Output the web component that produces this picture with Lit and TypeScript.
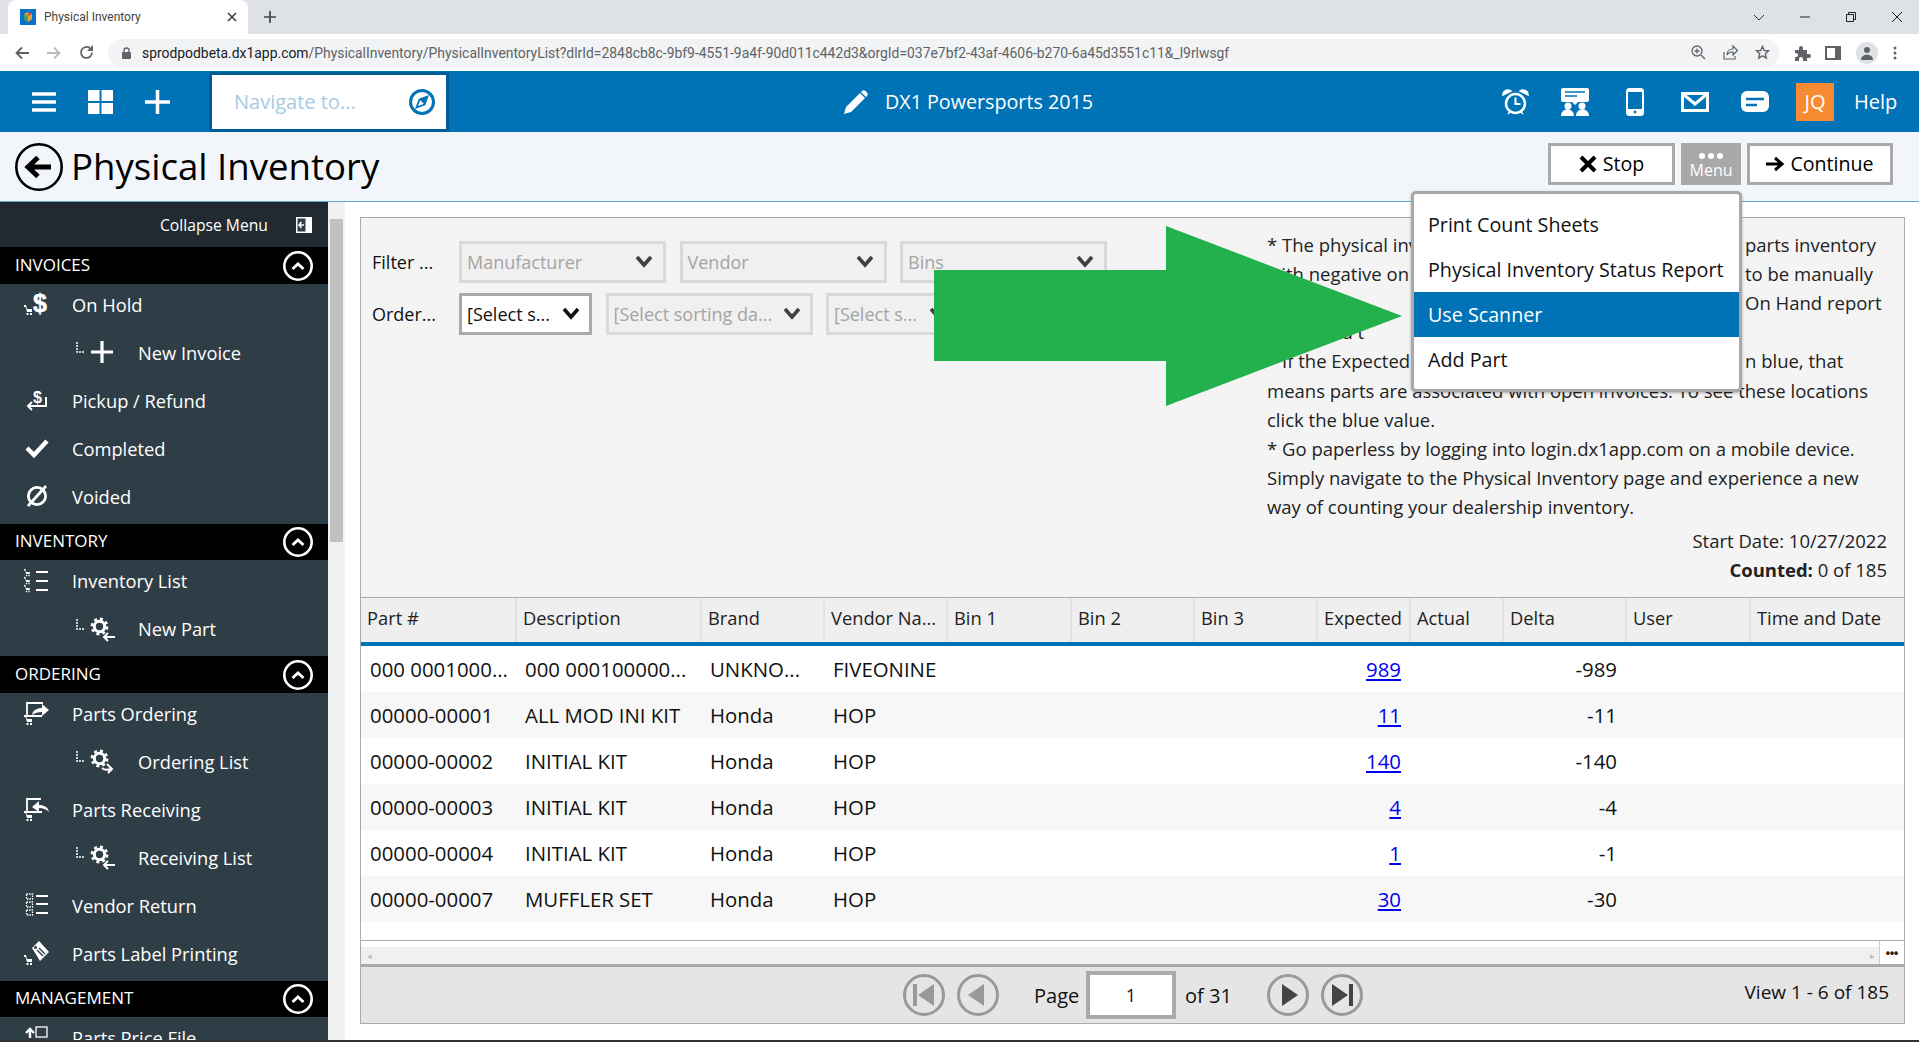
import { LitElement, html, css, svg } from "lit";
import { customElement } from "lit/decorators.js";

const W = "#fff";
const cart = (x = 0, y = 0) => svg`<g transform="translate(${x} ${y})" fill="#fff"><path d="M0 0h2l1 4h5v3H3L1.600 2H0z"/><rect x="2.500" y="8" width="2" height="2"/><rect x="6" y="8" width="2" height="2"/></g>`;
const miniCart = (y: number) => svg`<g transform="translate(0 ${y}) scale(.72)">${cart()}</g>`;
const gear = (x: number, y: number) => svg`<g transform="translate(${x} ${y})" fill="none" stroke="#fff"><circle r="5.200" stroke-width="3"/><circle r="7.600" stroke-width="2.600" stroke-dasharray="3 3"/></g>`;
const ic = (w: number, h: number, body: unknown) => html`<svg width=${w} height=${h} viewBox="0 0 ${w} ${h}" aria-hidden="true">${body}</svg>`;

const sideIcons: Record<string, unknown> = {
  hold: ic(26, 24, svg`<text x="9" y="20" font-family="Liberation Sans" font-weight="700" font-size="25" fill="#fff" stroke="#fff" stroke-width=".5">$</text>${cart(0, 13)}`),
  pickup: ic(26, 24, svg`<text x="9" y="15" font-family="Liberation Sans" font-weight="700" font-size="16" fill="#fff">$</text><path d="M22 9v9H4M8 14l-4 4 4 4" fill="none" stroke="#fff" stroke-width="2"/>`),
  check: ic(26, 24, svg`<path d="M3 12l7 7L23 5" fill="none" stroke="#fff" stroke-width="4.400"/>`),
  void: ic(26, 24, svg`<circle cx="13" cy="12" r="8.600" fill="none" stroke="#fff" stroke-width="2.800"/><path d="M4 22L22 2" stroke="#fff" stroke-width="2.800"/>`),
  list: ic(26, 24, svg`${miniCart(0)}${miniCart(8)}${miniCart(16)}<path d="M12 3h12M12 12h12M12 21h12" stroke="#fff" stroke-width="2"/>`),
  order: ic(26, 24, svg`<path d="M3 16V2h16M3 15h15" fill="none" stroke="#fff" stroke-width="1.800"/><path d="M8 14c1-5 5-7 10-7V3l7 6-7 6v-4c-4 0-7 1-10 3z" fill="#fff"/>${cart(0, 14)}`),
  recv: ic(26, 24, svg`<path d="M3 16V2h14M3 15h15" fill="none" stroke="#fff" stroke-width="1.800"/><path d="M25 15c-1-5-5-7-10-7V4L8 10l7 5v-4c4 0 7 1 10 4z" fill="#fff"/>${cart(0, 14)}`),
  ret: ic(26, 24, svg`${[1, 9, 17].map((y) => svg`<rect x="2.500" y=${y} width="6" height="5" fill="none" stroke="#fff" stroke-width="1.300" stroke-dasharray="1.500 1"/>`)}<path d="M12 3h12M12 11h12M12 20h12" stroke="#fff" stroke-width="2"/>`),
  label: ic(26, 24, svg`<path d="M8 7l7-7 10 11-9 9z" fill="#fff"/><circle cx="11.500" cy="6.500" r="1.500" fill="#2f3d46"/><path d="M13 9l6 6M15 7l6 6" stroke="#2f3d46" stroke-width="1.400"/>${cart(0, 14)}`),
  price: ic(26, 24, svg`<path d="M6 12V4M2 7l4-4 4 4" fill="none" stroke="#fff" stroke-width="2.400"/><rect x="12" y="1" width="11" height="10" fill="none" stroke="#fff" stroke-width="1.300"/>`),
};
const subIcons: Record<string, unknown> = {
  plus: ic(24, 24, svg`<path d="M12 1v22M1 12h22" stroke="#fff" stroke-width="3.200"/>`),
  gearIn: ic(26, 24, svg`${gear(9.500, 9.500)}<path d="M25 20H14M18 16l-4 4 4 4" fill="none" stroke="#fff" stroke-width="2"/>`),
  gearOut: ic(26, 24, svg`${gear(9.500, 9.500)}<path d="M12 19c3 3 6 2 9 1M17 15l5 5-4 4" fill="none" stroke="#fff" stroke-width="2"/>`),
};

type Item = { t: string; i: string; sub?: boolean };
const menu: { h: string; items: Item[] }[] = [
  { h: "INVOICES", items: [
    { t: "On Hold", i: "hold" }, { t: "New Invoice", i: "plus", sub: true },
    { t: "Pickup / Refund", i: "pickup" }, { t: "Completed", i: "check" }, { t: "Voided", i: "void" } ] },
  { h: "INVENTORY", items: [ { t: "Inventory List", i: "list" }, { t: "New Part", i: "gearIn", sub: true } ] },
  { h: "ORDERING", items: [
    { t: "Parts Ordering", i: "order" }, { t: "Ordering List", i: "gearOut", sub: true },
    { t: "Parts Receiving", i: "recv" }, { t: "Receiving List", i: "gearIn", sub: true },
    { t: "Vendor Return", i: "ret" }, { t: "Parts Label Printing", i: "label" } ] },
  { h: "MANAGEMENT", items: [ { t: "Parts Price File", i: "price" } ] },
];

const cols = ["Part #", "Description", "Brand", "Vendor Na...", "Bin 1", "Bin 2", "Bin 3", "Expected", "Actual", "Delta", "User", "Time and Date"];
const rows = [
  ["000 0001000...", "000 000100000...", "UNKNO...", "FIVEONINE", "989", "-989"],
  ["00000-00001", "ALL MOD INI KIT", "Honda", "HOP", "11", "-11"],
  ["00000-00002", "INITIAL KIT", "Honda", "HOP", "140", "-140"],
  ["00000-00003", "INITIAL KIT", "Honda", "HOP", "4", "-4"],
  ["00000-00004", "INITIAL KIT", "Honda", "HOP", "1", "-1"],
  ["00000-00007", "MUFFLER SET", "Honda", "HOP", "30", "-30"],
];
const notes: [string, string][] = [
  ["* The physical inv", "parts inventory"],
  ["with negative on", "to be manually"],
  ["If you can", "On Hand report"],
  ["if you find t", ""],
  ["* If the Expected", "n blue, that"],
];
const notesFull = [
  "means parts are associated with open invoices. To see these locations",
  "click the blue value.",
  "* Go paperless by logging into login.dx1app.com on a mobile device.",
  "Simply navigate to the Physical Inventory page and experience a new",
  "way of counting your dealership inventory.",
];

const chevron = ic(18, 14, svg`<path d="M2 2l7 8 7-8" fill="none" stroke="currentColor" stroke-width="3.600"/>`);

@customElement("app-root")
export class AppRoot extends LitElement {
  static styles = css`
    :host { display: block; width: 1919px; height: 1042px; position: relative; overflow: hidden; background: #fff;
      font-family: "Open Sans", "Noto Sans", sans-serif; color: #111; }
    svg { display: block; flex: none; overflow: visible; }
    .tabs { height: 34px; background: #dee1e6; display: flex; align-items: center; position: relative; }
    .tab { width: 240px; height: 34px; margin-left: 8px; background: #fff; border-radius: 8px 8px 0 0; display: flex; align-items: center;
      padding: 0 11px 0 12px; box-sizing: border-box; font: 12px Roboto, sans-serif; color: #444; gap: 8px; }
    .tab .name { flex: 1; }
    .newtab { margin-left: 16px; }
    .winctl { margin-left: auto; display: flex; align-items: center; gap: 30px; padding-right: 14px; }
    .addr { height: 37px; background: #fff; display: flex; align-items: center; padding-left: 15px; box-sizing: border-box; }
    .nav3 { display: flex; gap: 18px; align-items: center; width: 93px; flex: none; }
    .pill { width: 1671px; height: 28px; flex: none; background: #f1f3f4; border-radius: 14px; display: flex; align-items: center; padding: 0 9px 0 34px; box-sizing: border-box; position: relative; font: 13.900px Roboto, sans-serif; color: #5f6368; }
    .lock { position: absolute; left: 14px; top: 8px; }
    .url { flex: 1; white-space: nowrap; }
    .url b { font-weight: 400; color: #202124; }
    .pillic { display: flex; gap: 17px; align-items: center; }
    .ext { display: flex; align-items: center; gap: 15px; margin-left: 15px; }
    .avatar { width: 22px; height: 22px; border-radius: 50%; background: #dee1e6; display: flex; align-items: center; justify-content: center; }
    .blue { height: 61px; background: #0073b7; display: flex; align-items: center; color: #fff; position: relative; }
    .blue .l { display: flex; align-items: center; gap: 32px; padding-left: 32px; width: 209px; flex: none; box-sizing: border-box; }
    .search { width: 240px; height: 60px; flex: none; border: 3px solid #005e96; box-sizing: border-box; background: #fff; display: flex; align-items: center; justify-content: space-between; padding: 0 10px 0 22px; color: #a5cbe5; font-size: 20px; }
    .center { display: flex; align-items: center; gap: 17px; margin-left: 395px; font-size: 19.700px; }
    .r { position: absolute; left: 1502px; top: 0; height: 61px; display: flex; align-items: center; }
    .ri { margin-right: 32px; }
    .ri.ph { margin-left: 5px; margin-right: 37px; }
    .jq { width: 38px; height: 38px; background: #f68b33; display: flex; align-items: center; justify-content: center; font-size: 20px; margin-left: -5px; }
    .help { margin-left: 20px; font-size: 20px; }
    .title { height: 69px; background: #f2f6fa; border-bottom: 1px solid #5fa5d3; display: flex; align-items: center; position: relative; }
    .back { margin-left: 15px; }
    .title h1 { margin: -2px 0 0 8px; font-weight: 400; font-size: 36.600px; color: #000; }
    .btns { margin-left: auto; padding-right: 26px; display: flex; gap: 6px; align-items: center; margin-top: -6px; }
    .btn { height: 42px; border: 3px solid #aaa; background: #fff; box-sizing: border-box; display: flex; align-items: center; justify-content: center; gap: 6px; font-size: 19.600px; color: #000; }
    .stop { width: 127px; } .cont { width: 146px; }
    .mbtn { width: 60px; height: 42px; background: #a9a9a9; color: #fff; display: flex; flex-direction: column; align-items: center; font-size: 16px; line-height: 18px; padding-top: 10px; box-sizing: border-box; }
    .dots { display: flex; gap: 3px; height: 6px; margin-bottom: 2px; }
    .dots i { width: 6px; height: 6px; border-radius: 50%; background: #fff; }
    .body { display: flex; height: 839px; }
    .side { width: 328px; background: #2f3d46; color: #fff; overflow: hidden; flex: none; }
    .coll { height: 45px; background: #212a31; display: flex; align-items: center; justify-content: flex-end; padding-right: 16px; gap: 28px; font-size: 15.700px; }
    .sh { height: 36.500px; background: #000; display: flex; align-items: center; justify-content: space-between; padding: 0 15px; font-size: 17px; }
    .sh > span:first-child { margin-top: -2px; }
    .circ { width: 30px; height: 30px; margin-top: 1px; }
    .it { height: 48px; display: flex; align-items: center; font-size: 18.300px; padding: 0 0 7px 24px; box-sizing: border-box; }
    .it .t { margin-left: 22px; }
    .it.sub { padding-left: 76px; }
    .it.sub .t { margin-left: 24px; }
    .sic { width: 24px; flex: none; }
    .corner { margin-right: 6px; margin-top: -8px; }
    .sb { width: 17px; background: #f1f1f1; flex: none; position: relative; }
    .sb .th { margin: 17px 2px 0; height: 323px; background: #c1c1c1; }
    .main { flex: 1; padding: 15px 0 0 15px; background: #fff; }
    .panel { width: 1545px; height: 807px; background: #f4f4f4; border: 1px solid #aaa; box-sizing: border-box; display: flex; flex-direction: column; }
    .top { height: 379px; display: flex; }
    .filters { width: 906px; padding: 23px 0 0 11px; box-sizing: border-box; }
    .frow { display: flex; align-items: center; gap: 13.500px; height: 42px; margin-bottom: 10px; font-size: 18px; }
    .frow label { width: 74px; margin-right: -.5px; }
    .sel { height: 42px; width: 207px; border: 3px solid #d9d9d9; background: #f0f0f0; box-sizing: border-box; color: #a4a4a4; display: flex; align-items: center; justify-content: space-between; padding: 0 10px 0 5px; font-size: 18px; }
    .sel svg { color: #404040; }
    .sel.on { width: 133px; background: #fff; border-color: #aaa; color: #111; padding-right: 9px; }
    .sel.on svg { color: #111; }
    .sel.dis2 { padding-right: 9px; }
    .sel.s { width: 133px; }
    .notes { flex: 1; padding: 11.500px 17px 0 0; font-size: 18.500px; line-height: 29.200px; color: #222; box-sizing: border-box; }
    .nl { display: grid; grid-template-columns: 478px auto; white-space: nowrap; }
    .tot { text-align: right; margin-top: 4px; }
    .tot b { font-weight: 700; }
    .grid { display: grid; grid-template-columns: 156px 185px 123px 123px 124px 123px 123px 93px 93px 123px 124px 1fr; align-items: center; }
    .thead { height: 49px; border-top: 1px solid #aaa; border-bottom: 4px solid #0073b7; background: #efefef; box-sizing: border-box; font-size: 18.300px; color: #222; }
    .thead div { height: 44px; display: flex; align-items: center; padding: 0 0 5px 6px; border-right: 2px solid #e2e2e2; box-sizing: border-box; white-space: nowrap; overflow: hidden; }
    .thead div:last-child { border-right: 0; }
    .tbody { background: #fff; height: 294px; border-bottom: 1px solid #aaa; }
    .tr { height: 46px; font-size: 20.400px; color: #111; white-space: nowrap; }
    .tr:nth-child(even) { background: #f7f7f7; }
    .tr > div { padding-left: 8px; }
    .tr > div:first-child { padding-left: 9px; }
    .num { text-align: right; padding-right: 10px; padding-left: 0 !important; }
    a { color: #00e; text-decoration: underline; }
    .hs { height: 17px; background: #f0f0f0; border-top: 6px solid #fff; border-bottom: 3px solid #a9a9a9; display: flex; align-items: center; justify-content: space-between; position: relative; }
    .hsend { display: flex; align-items: center; }
    .hsend .hsa { margin-right: 4px; }
    .hsdots { width: 24px; height: 23px; margin-top: -6px; background: #fff; border-left: 1px solid #ccc; display: flex; align-items: center; justify-content: center; font: 700 12px "Liberation Sans", sans-serif; color: #222; }
    .hsa { margin-left: 6px; color: #bbb; font-size: 9px; }
    .foot { flex: 1; background: #e5e5e5; position: relative; display: flex; align-items: center; font-size: 20px; }
    .pg { display: flex; align-items: center; padding-left: 542px; }
    .pbtn { margin-right: 12px; }
    .pl { margin-left: 23px; width: 52px; }
    .pinput { width: 90px; height: 48px; border: 4px solid #aaa; background: #fff; box-sizing: border-box; display: flex; align-items: center; justify-content: center; font-size: 18px; }
    .pof { margin-left: 9px; width: 82px; }
    .view { position: absolute; right: 15px; top: 12px; font-size: 19px; }
    .drop { position: absolute; left: 1411px; top: 191px; width: 331px; height: 201px; border: 3px solid #a9a9a9; border-radius: 5px; background: #fff; box-sizing: border-box; padding-top: 8px; box-shadow: 0 1px 3px rgba(0,0,0,.3); font-size: 19.700px; color: #111; }
    .di { height: 45px; padding-left: 14px; display: flex; align-items: center; white-space: nowrap; }
    .di.cur { background: #0073b7; color: #fff; }
    .arrow { position: absolute; left: 934px; top: 226px; }
    .task { position: absolute; left: 0; right: 0; bottom: 0; height: 2px; background: #333; }
  `;

  private tabBar() {
    return html`<div class="tabs">
      <div class="tab">
        ${ic(16, 16, svg`<rect width="16" height="16" fill="#0a72c9"/><path d="M8 3l4 2v5l-4 3-4-3V5z" fill="#e9a23b"/><path d="M8 3l4 2-4 2z" fill="#d9463d"/><path d="M4 5l4 2v6l-4-3z" fill="#3fa45b"/>`)}
        <span class="name">Physical Inventory</span>
        ${ic(10, 10, svg`<path d="M1 1l8 8M9 1L1 9" stroke="#444" stroke-width="1.700"/>`)}
      </div>
      <div class="newtab">${ic(12, 12, svg`<path d="M6 0v12M0 6h12" stroke="#444" stroke-width="1.700"/>`)}</div>
      <div class="winctl">
        ${ic(16, 16, svg`<path d="M3 6l5 5 5-5" fill="none" stroke="#333" stroke-width="1"/>`)}
        ${ic(16, 16, svg`<path d="M3 8h10" stroke="#222" stroke-width="1"/>`)}
        ${ic(16, 16, svg`<path d="M3.500 5.500h7v7h-7zM5.500 5V3.500h7v7H11" fill="none" stroke="#222" stroke-width="1"/>`)}
        ${ic(16, 16, svg`<path d="M3 3l10 10M13 3L3 13" stroke="#222" stroke-width="1"/>`)}
      </div>
    </div>`;
  }

  private addrBar() {
    return html`<div class="addr">
      <div class="nav3">
        ${ic(14, 14, svg`<path d="M14 7H2M7 1.500L1.500 7 7 12.500" fill="none" stroke="#5f6368" stroke-width="1.800"/>`)}
        ${ic(14, 14, svg`<path d="M0 7h12M7 1.500L12.500 7 7 12.500" fill="none" stroke="#b8bbbf" stroke-width="1.800"/>`)}
        ${ic(15, 15, svg`<path d="M13 7.500A5.500 5.500 0 1 1 11 3.200" fill="none" stroke="#5f6368" stroke-width="1.800"/><path d="M14 0v6H8z" fill="#5f6368"/>`)}
      </div>
      <div class="pill">
        <span class="lock">${ic(9, 12, svg`<rect y="5" width="9" height="7" rx="1" fill="#5f6368"/><path d="M2 5V3.500a2.500 2.500 0 0 1 5 0V5" fill="none" stroke="#5f6368" stroke-width="1.300"/>`)}</span>
        <span class="url"><b>sprodpodbeta.dx1app.com</b>/PhysicalInventory/PhysicalInventoryList?dlrId=2848cb8c-9bf9-4551-9a4f-90d011c442d3&amp;orgId=037e7bf2-43af-4606-b270-6a45d3551c11&amp;_l9rlwsgf</span>
        <span class="pillic">
          ${ic(15, 15, svg`<circle cx="6" cy="6" r="5" fill="none" stroke="#5f6368" stroke-width="1.300"/><path d="M10 10l4 4M3.500 6h5M6 3.500v5" stroke="#5f6368" stroke-width="1.300"/>`)}
          ${ic(15, 15, svg`<path d="M1 7v7h11v-3M4 10c0-4 3-6 6-6V1l4.500 4.500L10 10V7c-3 0-5 1-6 3z" fill="none" stroke="#5f6368" stroke-width="1.200"/>`)}
          ${ic(15, 15, svg`<path d="M7.500 1.500l1.800 4 4.200.4-3.200 2.900 1 4.200-3.800-2.200L3.700 13l1-4.200L1.500 5.900l4.200-.4z" fill="none" stroke="#5f6368" stroke-width="1.400"/>`)}
        </span>
      </div>
      <div class="ext">
        ${ic(16, 16, svg`<path d="M1 5h4V3a2 2 0 0 1 4 0v2h4v4h2a2 2 0 0 1 0 4h-2v3H9v-2a2 2 0 0 0-4 0v2H1v-4h1a2 2 0 0 0 0-4H1z" fill="#5f6368"/>`)}
        ${ic(16, 16, svg`<path d="M1 2h14v12H1z" fill="none" stroke="#5f6368" stroke-width="2"/><rect x="10" y="2" width="5" height="12" fill="#5f6368"/>`)}
        <span class="avatar">${ic(14, 14, svg`<circle cx="7" cy="4" r="3" fill="#5f6368"/><path d="M1 14c0-7 12-7 12 0z" fill="#5f6368"/>`)}</span>
        ${ic(4, 14, svg`<circle cx="2" cy="2" r="1.500" fill="#5f6368"/><circle cx="2" cy="7" r="1.500" fill="#5f6368"/><circle cx="2" cy="12" r="1.500" fill="#5f6368"/>`)}
      </div>
    </div>`;
  }

  private blueBar() {
    return html`<div class="blue">
      <div class="l">
        ${ic(24, 20, svg`<path d="M0 2h24M0 10h24M0 18h24" stroke="${W}" stroke-width="3.500"/>`)}
        ${ic(25, 24, svg`<path d="M0 0h11.500v11H0zM13.500 0H25v11H13.500zM0 13h11.500v11H0zM13.500 13H25v11H13.500z" fill="${W}"/>`)}
        ${ic(25, 24, svg`<path d="M12.500 0v24M0 12h25" stroke="${W}" stroke-width="3.500"/>`)}
      </div>
      <div class="search"><span>Navigate to...</span>
        ${ic(28, 28, svg`<circle cx="14" cy="14" r="11.500" fill="none" stroke="#0073b7" stroke-width="3"/><path d="M19.500 8.500l-3 8-8 3 3-8z" fill="none" stroke="#0073b7" stroke-width="1.800"/><path d="M19.500 8.500l-3 8-5-5z" fill="#0073b7"/>`)}
      </div>
      <div class="center">
        ${ic(24, 24, svg`<path d="M0 24l2-7L16 3l5 5L7 22zM18 1a2.500 2.500 0 0 1 3.500 0l1.500 1.500a2.500 2.500 0 0 1 0 3.500l-1 1-5-5z" fill="${W}"/>`)}
        <span>DX1 Powersports 2015</span>
      </div>
      <div class="r">
        <span class="ri">${ic(27, 28, svg`<circle cx="13.500" cy="15.500" r="9.500" fill="none" stroke="${W}" stroke-width="2.500"/><path d="M13.500 9.500v6.500h5" fill="none" stroke="${W}" stroke-width="2"/><path d="M1 7a5 5 0 0 1 8-4zM26 7a5 5 0 0 0-8-4zM6 26l3-3M21 26l-3-3" fill="${W}" stroke="${W}" stroke-width="1.500"/>`)}</span>
        <span class="ri">${ic(28, 28, svg`<path d="M2 0h24a2 2 0 0 1 2 2v10a2 2 0 0 1-2 2H17l-3 3-3-3H2a2 2 0 0 1-2-2V2a2 2 0 0 1 2-2z" fill="${W}"/><path d="M4 4h20M4 8h12" stroke="#0073b7" stroke-width="1.600"/><circle cx="7" cy="18" r="3.500" fill="${W}"/><circle cx="21" cy="18" r="3.500" fill="${W}"/><path d="M0 28c0-9 13-9 13 0zM15 28c0-9 13-9 13 0z" fill="${W}"/>`)}</span>
        <span class="ri ph">${ic(18, 28, svg`<rect x="1" y="1" width="16" height="26" rx="2.500" fill="none" stroke="${W}" stroke-width="2"/><rect x="1" y="1" width="16" height="3" fill="${W}"/><rect x="1" y="21" width="16" height="6" fill="${W}"/><circle cx="9" cy="24" r="1.400" fill="#0073b7"/>`)}</span>
        <span class="ri">${ic(28, 20, svg`<rect x="1.500" y="1.500" width="25" height="17" fill="none" stroke="${W}" stroke-width="3"/><path d="M2 2l12 10L26 2" fill="none" stroke="${W}" stroke-width="3"/>`)}</span>
        <span class="ri">${ic(28, 21, svg`<rect width="28" height="21" rx="6" fill="${W}"/><path d="M5 8h18M5 14h11" stroke="#0073b7" stroke-width="2.600"/>`)}</span>
        <div class="jq">JQ</div>
        <span class="help">Help</span>
      </div>
    </div>`;
  }

  private side() {
    return html`<div class="side">
      <div class="coll"><span>Collapse Menu</span>
        ${ic(16, 16, svg`<rect width="16" height="16" fill="${W}"/><rect x="1.500" y="1.500" width="8" height="13" fill="#2f3d46"/><path d="M8 8H3M5.500 5L3 8l2.500 3" fill="none" stroke="${W}" stroke-width="1.500"/>`)}
      </div>
      ${menu.map((m) => html`
        <div class="sh"><span>${m.h}</span>
          <span class="circ">${ic(30, 30, svg`<circle cx="15" cy="15" r="13.700" fill="none" stroke="${W}" stroke-width="2.600"/><path d="M9.500 18l5.500-5 5.500 5" fill="none" stroke="${W}" stroke-width="2.800"/>`)}</span>
        </div>
        ${m.items.map((it) => it.sub
          ? html`<div class="it sub"><span class="corner">${ic(8, 12, svg`<path d="M1 0v10h7" fill="none" stroke="${W}" stroke-width="1.500" stroke-dasharray="2 1"/>`)}</span><span class="sic">${subIcons[it.i]}</span><span class="t">${it.t}</span></div>`
          : html`<div class="it">${sideIcons[it.i]}<span class="t">${it.t}</span></div>`)}
      `)}
    </div>`;
  }

  private filters() {
    return html`<div class="filters">
      <div class="frow"><label>Filter ...</label>
        <div class="sel"><span>Manufacturer</span>${chevron}</div>
        <div class="sel"><span>Vendor</span>${chevron}</div>
        <div class="sel"><span>Bins</span>${chevron}</div>
      </div>
      <div class="frow"><label>Order...</label>
        <div class="sel on"><span>[Select s...</span>${chevron}</div>
        <div class="sel dis2"><span>[Select sorting da...</span>${chevron}</div>
        <div class="sel dis2 s"><span>[Select s...</span>${chevron}</div>
      </div>
    </div>`;
  }

  private table() {
    return html`
      <div class="grid thead">${cols.map((c) => html`<div>${c}</div>`)}</div>
      <div class="tbody">
        ${rows.map((r) => html`<div class="grid tr">
          <div>${r[0]}</div><div>${r[1]}</div><div>${r[2]}</div><div>${r[3]}</div><div></div><div></div><div></div>
          <div class="num"><a href="#">${r[4]}</a></div><div></div><div class="num">${r[5]}</div><div></div><div></div>
        </div>`)}
      </div>
      <div class="hs"><span class="hsa">◂</span><div class="hsend"><span class="hsa">▸</span><span class="hsdots">•••</span></div></div>`;
  }

  private pbtn(dark: boolean, path: unknown) {
    const c = dark ? "#444" : "#999";
    return html`<span class="pbtn">${ic(42, 42, svg`<circle cx="21" cy="21" r="19.500" fill="none" stroke="#999" stroke-width="3"/><g fill=${c}>${path}</g>`)}</span>`;
  }

  private footer() {
    return html`<div class="foot">
      <div class="pg">
        ${this.pbtn(false, svg`<rect x="10" y="10" width="4" height="22"/><path d="M31 10v22L15 21z"/>`)}
        ${this.pbtn(false, svg`<path d="M27 10v22L11 21z"/>`)}
        <span class="pl">Page</span>
        <div class="pinput">1</div>
        <span class="pof">of 31</span>
        ${this.pbtn(true, svg`<path d="M15 10v22l16-11z"/>`)}
        ${this.pbtn(true, svg`<path d="M11 10v22l16-11z"/><rect x="28" y="10" width="4" height="22"/>`)}
      </div>
      <div class="view">View 1 - 6 of 185</div>
    </div>`;
  }

  render() {
    return html`
      ${this.tabBar()}${this.addrBar()}${this.blueBar()}
      <div class="title">
        <span class="back">${ic(48, 48, svg`<circle cx="24" cy="24" r="22.700" fill="none" stroke="#000" stroke-width="2.600"/><path d="M36 24H14M23 14.500L13 24l10 9.500" fill="none" stroke="#000" stroke-width="5"/>`)}</span>
        <h1>Physical Inventory</h1>
        <div class="btns">
          <div class="btn stop">${ic(18, 18, svg`<path d="M2 2l14 14M16 2L2 16" stroke="#000" stroke-width="4"/>`)}<span>Stop</span></div>
          <div class="mbtn"><span class="dots"><i></i><i></i><i></i></span><span>Menu</span></div>
          <div class="btn cont">${ic(18, 16, svg`<path d="M0 8h15M9 2l7 6-7 6" fill="none" stroke="#000" stroke-width="3"/>`)}<span>Continue</span></div>
        </div>
      </div>
      <div class="body">
        ${this.side()}
        <div class="sb"><div class="th"></div></div>
        <div class="main">
          <div class="panel">
            <div class="top">
              ${this.filters()}
              <div class="notes">
                ${notes.map((n) => html`<div class="nl"><span>${n[0]}</span><span>${n[1]}</span></div>`)}
                ${notesFull.map((n) => html`<div class="nl"><span>${n}</span></div>`)}
                <div class="tot">Start Date: 10/27/2022<br /><b>Counted:</b> 0 of 185</div>
              </div>
            </div>
            ${this.table()}
            ${this.footer()}
          </div>
        </div>
      </div>
      <svg class="arrow" width="470" height="180" viewBox="0 0 470 180"><path d="M0 44h232V0l236 90-236 90v-45H0z" fill="#22b14c"/></svg>
      <div class="drop">
        <div class="di">Print Count Sheets</div>
        <div class="di">Physical Inventory Status Report</div>
        <div class="di cur">Use Scanner</div>
        <div class="di">Add Part</div>
      </div>
      <div class="task"></div>
    `;
  }
}
